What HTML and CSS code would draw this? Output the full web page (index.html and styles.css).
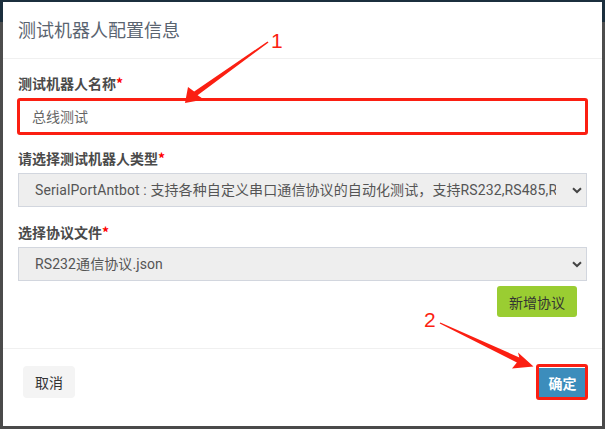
FILE: index.html
```html
<!DOCTYPE html>
<html lang="zh-CN">
<head>
<meta charset="utf-8">
<title>测试机器人配置信息</title>
<link rel="stylesheet" href="styles.css">
</head>
<body>
<div class="modal">
  <div class="modal-header">
    <h4 class="modal-title">测试机器人配置信息</h4>
  </div>
  <div class="modal-body">
    <div class="form-group">
      <label class="label">测试机器人名称<span class="req">*</span></label>
      <div class="field">
        <input class="input" type="text" value="总线测试">
        <span class="mark"></span>
      </div>
    </div>
    <div class="form-group">
      <label class="label">请选择测试机器人类型<span class="req">*</span></label>
      <div class="select">
        <span class="select-text">SerialPortAntbot : 支持各种自定义串口通信协议的自动化测试，支持RS232,RS485,RS422等串口通信</span>
        <svg class="chev" width="10" height="7" viewBox="0 0 10 7"><path d="M1 1.2 L5 5 L9 1.2" fill="none" stroke="#444" stroke-width="2"/></svg>
      </div>
    </div>
    <div class="form-group last">
      <label class="label">选择协议文件<span class="req">*</span></label>
      <div class="select">
        <span class="select-text">RS232通信协议.json</span>
        <svg class="chev" width="10" height="7" viewBox="0 0 10 7"><path d="M1 1.2 L5 5 L9 1.2" fill="none" stroke="#444" stroke-width="2"/></svg>
      </div>
    </div>
    <div class="actions">
      <button class="btn btn-green">新增协议</button>
    </div>
  </div>
  <div class="modal-footer">
    <button class="btn btn-default">取消</button>
    <div class="field">
      <button class="btn btn-primary">确定</button>
      <span class="mark mark-btn"></span>
    </div>
  </div>
</div>
<svg class="annot" width="605" height="429" viewBox="0 0 605 429">
  <polygon fill="#fb1f12" points="268.5,42.6 197.6,95.2 204,99.5 185,103 188,87 194.2,91.6 267.5,41.4"/>
  <polygon fill="#fb1f12" points="439.7,323.6 516.9,362.6 512,368.5 533.5,366.5 518,352.5 519.3,357.4 440.3,322.4"/>
  <text x="271" y="48" class="num">1</text>
  <text x="424" y="327" class="num">2</text>
</svg>
</body>
</html>
```
FILE: styles.css
```css
* { box-sizing: border-box; }
html, body { margin: 0; padding: 0; }
body {
  width: 605px;
  height: 429px;
  overflow: hidden;
  background: linear-gradient(#1b2f3d 0, #1b2f3d 22px, #4d4d4d 22px, #4a4a4a 100%);
  font-family: Roboto, "Noto Sans CJK SC", sans-serif;
  font-size: 14px;
  color: #333;
  position: relative;
}
.modal {
  margin: 2px 0 0 3px;
  width: 599px;
  height: 424px;
  background: #fff;
  display: flex;
  flex-direction: column;
}
.modal-header {
  height: 57px;
  border-bottom: 1px solid #f0f0f0;
  display: flex;
  align-items: center;
  padding: 0 15px 2px;
}
.modal-title {
  margin: 0;
  font-weight: normal;
  font-size: 18px;
  color: #5a6470;
  font-family: "Noto Sans CJK SC", sans-serif;
}
.modal-body {
  padding: 14px 15px 0;
  height: 290px;
  border-bottom: 1px solid #f0f0f0;
}
.form-group { margin-bottom: 15px; display: flex; flex-direction: column; }
.form-group.last { margin-bottom: 5px; }
.label {
  font-family: "Noto Sans CJK SC", sans-serif;
  font-weight: bold;
  font-size: 14px;
  line-height: 20px;
  color: #4a4a4a;
  margin-bottom: 6px;
}
.form-group + .form-group .label { margin-bottom: 5px; }
.req { color: #f00; }
.field { position: relative; }
.input {
  display: block;
  width: 100%;
  height: 34px;
  border: 1px solid #d2d6de;
  padding: 0 13px;
  font-family: Roboto, "Noto Sans CJK SC", sans-serif;
  font-size: 14px;
  color: #666;
  background: #fff;
  outline: none;
}
.mark {
  position: absolute;
  top: -1px; left: -1px; right: -1px; bottom: -2px;
  border: 3px solid #fb1f12;
  border-radius: 3px;
  pointer-events: none;
}
.select {
  display: flex;
  align-items: center;
  height: 34px;
  border: 1px solid #d2d6de;
  background: #eeeeee;
  padding: 0 4px 0 16px;
  color: #555;
  font-size: 14px;
}
.select-text {
  flex: 1;
  min-width: 0;
  margin-right: 16px;
  white-space: nowrap;
  overflow: hidden;
  line-height: 32px;
  letter-spacing: 0.1px;
}
.chev { flex: none; margin-top: 1px; }
.actions { display: flex; justify-content: flex-end; padding-right: 10px; }
.btn {
  font-family: "Noto Sans CJK SC", sans-serif;
  font-size: 14px;
  border: none;
  border-radius: 3px;
  padding: 0;
  cursor: pointer;
}
.btn-green {
  width: 80px;
  height: 31px;
  background: #9acd32;
  color: #333;
}
.modal-footer {
  flex: 1;
  display: flex;
  justify-content: space-between;
  align-items: flex-start;
  padding: 17px 16px 0 20px;
}
.modal-footer .field { margin-top: 1px; }
.btn-default {
  width: 52px;
  height: 32px;
  background: #f4f4f4;
  color: #333;
  border-radius: 4px;
}
.btn-primary {
  display: block;
  width: 47px;
  height: 30px;
  background: #3c8dbc;
  color: #fff;
  font-weight: bold;
  border-radius: 0;
  margin-top: 1px;
}
.mark-btn { top: -3px; left: -3px; right: -2px; bottom: -2px; }
.annot {
  position: absolute;
  left: 0;
  top: 0;
  pointer-events: none;
}
.num {
  fill: #fb1f12;
  font-family: "Liberation Sans", Arial, sans-serif;
  font-size: 21px;
}
```
